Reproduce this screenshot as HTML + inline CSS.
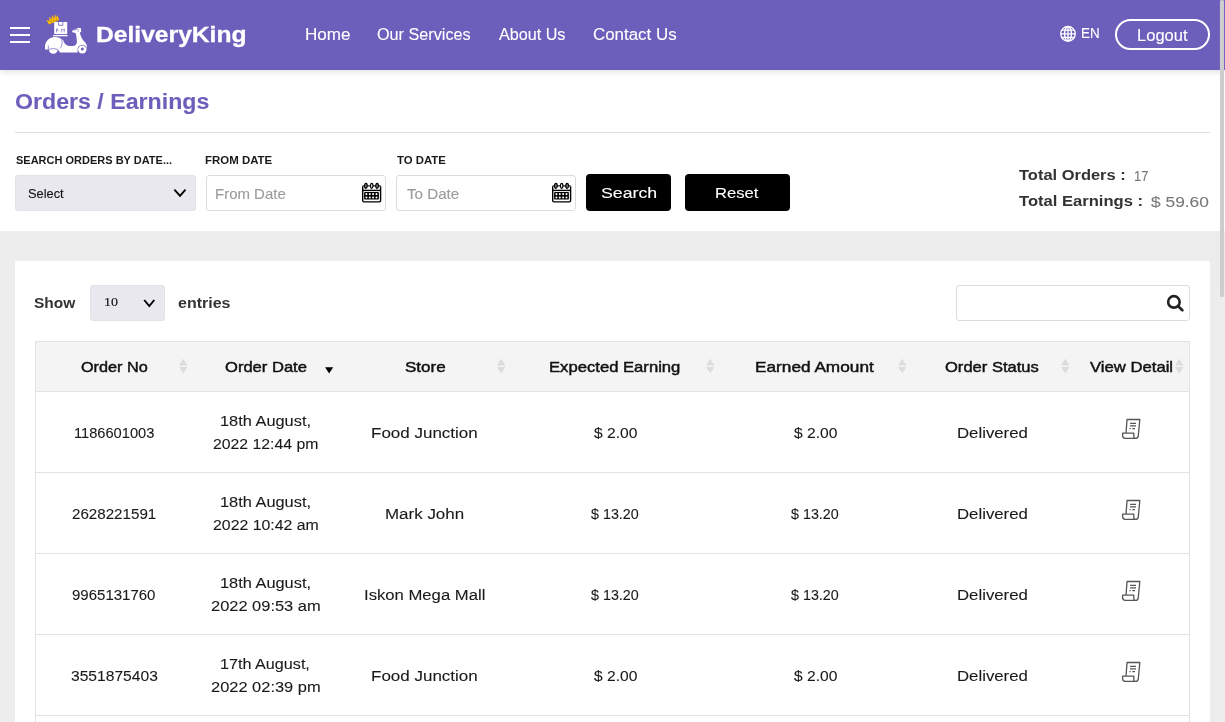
<!DOCTYPE html>
<html>
<head>
<meta charset="utf-8">
<style>
*{box-sizing:border-box;margin:0;padding:0}
html,body{width:1225px;height:722px;overflow:hidden;background:#ededed}
body{font-family:"Liberation Sans",sans-serif;position:relative;color:#222}
.a{position:absolute}
.t{position:absolute;white-space:nowrap;line-height:1.15;transform-origin:0 0}
#hdr{position:absolute;left:0;top:0;width:1225px;height:70px;background:#6c5fbc;box-shadow:0 2px 6px rgba(0,0,0,.12);z-index:1}
#top{position:absolute;left:0;top:70px;width:1225px;height:161px;background:#fff}
.sel{background:#e9e8ee;border:1px solid #e2e1e7;border-radius:3px}
.inp{background:#fff;border:1px solid #dcdcdc;border-radius:3px}
.btn{background:#000;border-radius:4px}
#card{position:absolute;left:15px;top:261px;width:1195px;height:461px;background:#fff}
</style>
</head>
<body>
<svg style="display:none"><defs><g id="receipt" fill="none" stroke="#555" stroke-width="1.3" stroke-linejoin="round">
<path d="M10,18.2 L11.05,4.5 H23.8 L22.3,20.8 Q22,23.3 19.6,23.3 Q17.8,23.3 17.8,21.4 V18.2 H6.6 V20.6 Q6.6,23.3 9.2,23.3 H19.6"/>
<path d="M14.1,8.3 H20 M14,10.9 H20 M13.4,13.6 H14.6 M16.3,13.6 H19"/>
</g></defs></svg>
<div id="top"></div>
<div id="hdr"></div>
<div class="a" style="left:10px;top:27px;width:20px;height:2px;background:#fff;z-index:2"></div>
<div class="a" style="left:10px;top:34px;width:20px;height:2px;background:#fff;z-index:2"></div>
<div class="a" style="left:10px;top:41px;width:20px;height:2px;background:#fff;z-index:2"></div>
<div style="position:absolute;left:0;top:0;z-index:2">
<svg class="a" style="left:42px;top:12px" width="50" height="45" viewBox="0 0 50 45">
<g transform="translate(10.7 7.3) rotate(-24)"><path d="M-5.6,3.2 L-6,-2.2 L-3.6,0.2 L-2.4,-3.8 L-0.8,-0.2 L0.8,-4.4 L2.2,-0.2 L3.8,-3.8 L4.6,0.2 L6.2,-2.4 L5.6,3.2 Z" fill="#f5b800"/>
<circle cx="-2.4" cy="1.6" r="0.7" fill="#c98a00"/><circle cx="0.6" cy="1.6" r="0.7" fill="#c98a00"/><circle cx="3.4" cy="1.6" r="0.7" fill="#c98a00"/></g>
<rect x="12.2" y="10" width="13" height="12.1" fill="#fff"/>
<path d="M16.6,10 V13.3 H20.8 V10" fill="none" stroke="#6c5fbc" stroke-width="0.8"/>
<path d="M14.5,20.4 V16.8 h1.3 v1.7 h-1.3 M19.8,20.4 V17 L19.1,18 M19.8,17 L20.5,18 M22.2,20.4 V17 L21.5,18 M22.2,17 L22.9,18" fill="none" stroke="#6c5fbc" stroke-width="0.6"/>
<rect x="11.2" y="23" width="14.4" height="1.3" fill="#fff"/>
<circle cx="11.3" cy="37.4" r="4.4" fill="#fff"/>
<circle cx="40.3" cy="37.1" r="4.3" fill="#fff"/>
<path d="M3,37.4 L3,33.6 C3.6,28.6 8,24.9 12.6,24.9 C16.6,24.9 19.6,26.4 21.2,28.2 C22.6,32.4 25,34 28.2,34 L30.4,34 C33.4,34 35,32.2 34.9,29.8 C34.8,26.8 34.4,23.6 33.6,21.1 L30.4,20.2 L30.2,18.6 L36.6,15.8 L39,16.2 L39.1,19.7 L37.9,20.4 C38.3,23.6 40,27.4 43.2,30.6 C44.6,32.2 45,34 45,36.2 L45,37.4 C45,35 43,33 40.3,33 C37.6,33 35.6,35 35.6,37.4 L35.6,40.6 L18,40.6 L16,37.4 L3,37.4 Z" fill="#fff"/>
<path d="M19,26 C20.6,28.6 20.6,33.6 18.2,36.4 M6.6,37.6 C8.5,36.4 14,36.4 15.9,37.6" fill="none" stroke="#6c5fbc" stroke-width="0.7"/>
<path d="M6.3,33.6 V37.4" stroke="#6c5fbc" stroke-width="0.7"/>
<path d="M36.2,36.4 C36.6,34.6 38.2,33.2 40.3,33.2 C42.4,33.2 44,34.6 44.4,36.4" fill="none" stroke="#6c5fbc" stroke-width="0.7"/>
<circle cx="40.3" cy="37.1" r="1.5" fill="#6c5fbc"/>
<path d="M31.4,18.6 C32.6,18 33.8,17.5 35,17.3 M35.6,17 C36.4,17.8 36.6,19 36,19.8" stroke="#6c5fbc" stroke-width="0.6" fill="none"/>
</svg>
<svg class="a" style="left:1059px;top:25px" width="18" height="18" viewBox="0 0 18 18">
<g fill="none" stroke="#fff" stroke-width="1.3">
<circle cx="9" cy="8.8" r="7.3"/>
<ellipse cx="9" cy="8.8" rx="3.4" ry="7.3"/>
<path d="M9,1.5 V16.1 M1.7,8.8 H16.3 M2.6,5.1 H15.4 M2.6,12.5 H15.4"/>
</g></svg>
<div class="a" style="left:1115px;top:19px;width:95px;height:31px;border:2px solid #fff;border-radius:16px"></div>
</div>
<div class="a" style="left:1220px;top:0;width:3.5px;height:297px;background:#cdcdcd;border-radius:2px;box-shadow:0 0 0.8px #d8d8d8;z-index:5"></div>

<div class="a" style="left:15px;top:132px;width:1195px;height:1px;background:#dedede"></div>
<div class="a sel" style="left:15px;top:175px;width:181px;height:36px"></div>
<svg class="a" style="left:172px;top:187px" width="16" height="12" viewBox="0 0 16 12"><path d="M2.4,2.6 L8,8.8 L13.5,2.6" fill="none" stroke="#000" stroke-width="1.9"/></svg>
<div class="a inp" style="left:206px;top:175px;width:180px;height:36px"></div>
<svg class="a" style="left:361px;top:181px" width="22" height="23" viewBox="0 0 22 23">
<g fill="none" stroke="#000" stroke-width="1.4">
<path d="M1.7,5.2 V19.6 Q1.7,20.9 3,20.9 H18.3 Q19.6,20.9 19.6,19.6 V5.2"/>
<path d="M1.7,9.4 H19.6"/>
<path d="M1.7,4.9 H19.6" stroke-width="1.1"/>
</g>
<g fill="#888" stroke="#000" stroke-width="1.2">
<ellipse cx="4.9" cy="4.8" rx="1.35" ry="2.5"/><ellipse cx="10.7" cy="4.8" rx="1.2" ry="2.5" fill="#fff"/><ellipse cx="16.1" cy="4.8" rx="1.35" ry="2.5"/>
</g>
<rect x="3.1" y="11.1" width="14.8" height="7.4" rx="0.8" fill="#000"/>
<g fill="#fff"><circle cx="5.4" cy="13.1" r="1.05"/><circle cx="8.8" cy="13.1" r="1.05"/><circle cx="12.1" cy="13.1" r="1.05"/><circle cx="15.5" cy="13.1" r="1.05"/>
<circle cx="5.4" cy="16.5" r="1.05"/><circle cx="8.8" cy="16.5" r="1.05"/><circle cx="12.1" cy="16.5" r="1.05"/><circle cx="15.5" cy="16.5" r="1.05"/></g>
</svg>
<div class="a inp" style="left:396px;top:175px;width:180px;height:36px"></div>
<svg class="a" style="left:551px;top:181px" width="22" height="23" viewBox="0 0 22 23">
<g fill="none" stroke="#000" stroke-width="1.4">
<path d="M1.7,5.2 V19.6 Q1.7,20.9 3,20.9 H18.3 Q19.6,20.9 19.6,19.6 V5.2"/>
<path d="M1.7,9.4 H19.6"/>
<path d="M1.7,4.9 H19.6" stroke-width="1.1"/>
</g>
<g fill="#888" stroke="#000" stroke-width="1.2">
<ellipse cx="4.9" cy="4.8" rx="1.35" ry="2.5"/><ellipse cx="10.7" cy="4.8" rx="1.2" ry="2.5" fill="#fff"/><ellipse cx="16.1" cy="4.8" rx="1.35" ry="2.5"/>
</g>
<rect x="3.1" y="11.1" width="14.8" height="7.4" rx="0.8" fill="#000"/>
<g fill="#fff"><circle cx="5.4" cy="13.1" r="1.05"/><circle cx="8.8" cy="13.1" r="1.05"/><circle cx="12.1" cy="13.1" r="1.05"/><circle cx="15.5" cy="13.1" r="1.05"/>
<circle cx="5.4" cy="16.5" r="1.05"/><circle cx="8.8" cy="16.5" r="1.05"/><circle cx="12.1" cy="16.5" r="1.05"/><circle cx="15.5" cy="16.5" r="1.05"/></g>
</svg>
<div class="a btn" style="left:586px;top:174px;width:85px;height:37px"></div>
<div class="a btn" style="left:685px;top:174px;width:105px;height:37px"></div>

<div id="card"></div>
<div class="a sel" style="left:90px;top:285px;width:75px;height:36px"></div>
<svg class="a" style="left:141px;top:297px" width="16" height="12" viewBox="0 0 16 12"><path d="M3.2,3 L8.3,9 L13.3,3" fill="none" stroke="#000" stroke-width="1.9"/></svg>
<div class="a inp" style="left:956px;top:285px;width:234px;height:36px"></div>
<svg class="a" style="left:1162px;top:290px" width="26" height="26" viewBox="0 0 26 26"><circle cx="11.9" cy="11.9" r="5.75" fill="none" stroke="#222" stroke-width="2.6"/><path d="M16.2,16.2 L20.4,20.3" stroke="#222" stroke-width="2.6" stroke-linecap="round"/></svg>

<div class="a" style="left:35px;top:341px;width:1155px;height:381px;border:1px solid #e2e2e2;border-bottom:none"></div>
<div class="a" style="left:36px;top:342px;width:1153px;height:50px;background:#f4f4f4;border-bottom:1px solid #e2e2e2"></div>
<svg class="a" style="left:179.1px;top:354px" width="10" height="22" viewBox="0 0 10 22"><path d="M0,11.6 H8.5 L4.2,4.7 Z M0,13.1 H8.5 L4.2,19.6 Z" fill="#dcdcdc"/></svg>
<svg class="a" style="left:325.1px;top:354px" width="10" height="22" viewBox="0 0 10 22"><path d="M0.1,13.2 H8.2 L4.15,19.5 Z" fill="#000"/></svg>
<svg class="a" style="left:497.1px;top:354px" width="10" height="22" viewBox="0 0 10 22"><path d="M0,11.6 H8.5 L4.2,4.7 Z M0,13.1 H8.5 L4.2,19.6 Z" fill="#dcdcdc"/></svg>
<svg class="a" style="left:706.1px;top:354px" width="10" height="22" viewBox="0 0 10 22"><path d="M0,11.6 H8.5 L4.2,4.7 Z M0,13.1 H8.5 L4.2,19.6 Z" fill="#dcdcdc"/></svg>
<svg class="a" style="left:898.1px;top:354px" width="10" height="22" viewBox="0 0 10 22"><path d="M0,11.6 H8.5 L4.2,4.7 Z M0,13.1 H8.5 L4.2,19.6 Z" fill="#dcdcdc"/></svg>
<svg class="a" style="left:1061.1px;top:354px" width="10" height="22" viewBox="0 0 10 22"><path d="M0,11.6 H8.5 L4.2,4.7 Z M0,13.1 H8.5 L4.2,19.6 Z" fill="#dcdcdc"/></svg>
<svg class="a" style="left:1175.1px;top:354px" width="10" height="22" viewBox="0 0 10 22"><path d="M0,11.6 H8.5 L4.2,4.7 Z M0,13.1 H8.5 L4.2,19.6 Z" fill="#dcdcdc"/></svg>
<div class="a" style="left:35px;top:472px;width:1155px;height:1px;background:#e2e2e2"></div>
<svg class="a" style="left:1116px;top:415px" width="30" height="28" viewBox="0 0 30 28"><use href="#receipt"/></svg>
<div class="a" style="left:35px;top:553px;width:1155px;height:1px;background:#e2e2e2"></div>
<svg class="a" style="left:1116px;top:496px" width="30" height="28" viewBox="0 0 30 28"><use href="#receipt"/></svg>
<div class="a" style="left:35px;top:634px;width:1155px;height:1px;background:#e2e2e2"></div>
<svg class="a" style="left:1116px;top:577px" width="30" height="28" viewBox="0 0 30 28"><use href="#receipt"/></svg>
<div class="a" style="left:35px;top:715px;width:1155px;height:1px;background:#e2e2e2"></div>
<svg class="a" style="left:1116px;top:658px" width="30" height="28" viewBox="0 0 30 28"><use href="#receipt"/></svg>
<div style="position:absolute;left:0;top:0;z-index:3;will-change:transform">
<div class="t" id="t0" style="left:96px;top:22px;font-size:22px;font-weight:700;color:#fff;letter-spacing:0.00px;transform:scaleX(1.1192);-webkit-text-stroke:0.3px #fff;">DeliveryKing</div>
<div class="t" id="t1" style="left:305px;top:26px;font-size:16px;font-weight:400;color:#fff;letter-spacing:0.00px;transform:scaleX(1.0664);-webkit-text-stroke:0.1px #fff;">Home</div>
<div class="t" id="t2" style="left:377px;top:26px;font-size:16px;font-weight:400;color:#fff;letter-spacing:0.00px;transform:scaleX(1.0127);-webkit-text-stroke:0.1px #fff;">Our Services</div>
<div class="t" id="t3" style="left:499px;top:26px;font-size:16px;font-weight:400;color:#fff;letter-spacing:0.00px;transform:scaleX(1.0088);-webkit-text-stroke:0.1px #fff;">About Us</div>
<div class="t" id="t4" style="left:593px;top:26px;font-size:16px;font-weight:400;color:#fff;letter-spacing:0.00px;transform:scaleX(1.0566);-webkit-text-stroke:0.1px #fff;">Contact Us</div>
<div class="t" id="t5" style="left:1081px;top:24px;font-size:15px;font-weight:400;color:#fff;letter-spacing:0.00px;transform:scaleX(0.8955);-webkit-text-stroke:0.1px #fff;">EN</div>
<div class="t" id="t6" style="left:1137px;top:27px;font-size:16px;font-weight:400;color:#fff;letter-spacing:0.00px;transform:scaleX(1.0325);-webkit-text-stroke:0.1px #fff;">Logout</div>
<div class="t" id="t7" style="left:15px;top:89px;font-size:22px;font-weight:700;color:#6c5fbc;letter-spacing:0.00px;transform:scaleX(1.0526);-webkit-text-stroke:0.1px #6c5fbc;">Orders / Earnings</div>
<div class="t" id="t8" style="left:16px;top:154px;font-size:10.8px;font-weight:700;color:#1a1a1a;letter-spacing:0.00px;transform:scaleX(1.0190);-webkit-text-stroke:0.0px #1a1a1a;">SEARCH ORDERS BY DATE...</div>
<div class="t" id="t9" style="left:205px;top:154px;font-size:10.8px;font-weight:700;color:#1a1a1a;letter-spacing:0.00px;transform:scaleX(1.0603);-webkit-text-stroke:0.0px #1a1a1a;">FROM DATE</div>
<div class="t" id="t10" style="left:397px;top:154px;font-size:10.8px;font-weight:700;color:#1a1a1a;letter-spacing:0.00px;transform:scaleX(1.0525);-webkit-text-stroke:0.0px #1a1a1a;">TO DATE</div>
<div class="t" id="t11" style="left:28px;top:187px;font-size:13px;font-weight:400;color:#111;letter-spacing:0.00px;transform:scaleX(0.9869);-webkit-text-stroke:0.1px #111;">Select</div>
<div class="t" id="t12" style="left:215px;top:186px;font-size:14.4px;font-weight:400;color:#9a9a9a;letter-spacing:0.00px;transform:scaleX(1.0409);-webkit-text-stroke:0.1px #9a9a9a;">From Date</div>
<div class="t" id="t13" style="left:407px;top:186px;font-size:14.4px;font-weight:400;color:#9a9a9a;letter-spacing:0.00px;transform:scaleX(1.0530);-webkit-text-stroke:0.1px #9a9a9a;">To Date</div>
<div class="t" id="t14" style="left:601px;top:184px;font-size:15.5px;font-weight:400;color:#fff;letter-spacing:0.00px;transform:scaleX(1.1453);-webkit-text-stroke:0.1px #fff;">Search</div>
<div class="t" id="t15" style="left:715px;top:184px;font-size:15.5px;font-weight:400;color:#fff;letter-spacing:0.00px;transform:scaleX(1.0705);-webkit-text-stroke:0.1px #fff;">Reset</div>
<div class="t" id="t16" style="left:1019px;top:167px;font-size:14.5px;font-weight:700;color:#333;letter-spacing:0.00px;transform:scaleX(1.1355);-webkit-text-stroke:0.0px #333;">Total Orders :</div>
<div class="t" id="t17" style="left:1134px;top:167px;font-size:15px;font-weight:400;color:#777;letter-spacing:0.00px;transform:scaleX(0.8652);-webkit-text-stroke:0.1px #777;">17</div>
<div class="t" id="t18" style="left:1019px;top:193px;font-size:14.5px;font-weight:700;color:#333;letter-spacing:0.00px;transform:scaleX(1.1431);-webkit-text-stroke:0.0px #333;">Total Earnings :</div>
<div class="t" id="t19" style="left:1151px;top:193px;font-size:15px;font-weight:400;color:#777;letter-spacing:0.00px;transform:scaleX(1.1570);-webkit-text-stroke:0.1px #777;">$ 59.60</div>
<div class="t" id="t20" style="left:34px;top:295px;font-size:14.5px;font-weight:700;color:#333;letter-spacing:0.00px;transform:scaleX(1.0685);-webkit-text-stroke:0.0px #333;">Show</div>
<div class="t" id="t21" style="left:104px;top:294px;font-size:13.5px;font-weight:400;color:#111;letter-spacing:0.00px;transform:scaleX(1.0370);-webkit-text-stroke:0.15px #111;font-family:'Liberation Serif',serif;">10</div>
<div class="t" id="t22" style="left:178px;top:295px;font-size:14.5px;font-weight:700;color:#333;letter-spacing:0.00px;transform:scaleX(1.1021);-webkit-text-stroke:0.0px #333;">entries</div>
<div class="t" id="t23" style="left:81px;top:359px;font-size:14.8px;font-weight:400;color:#111;letter-spacing:0.00px;transform:scaleX(1.0960);-webkit-text-stroke:0.45px #111;">Order No</div>
<div class="t" id="t24" style="left:225px;top:359px;font-size:14.8px;font-weight:400;color:#111;letter-spacing:0.00px;transform:scaleX(1.1191);-webkit-text-stroke:0.45px #111;">Order Date</div>
<div class="t" id="t25" style="left:405px;top:359px;font-size:14.8px;font-weight:400;color:#111;letter-spacing:0.00px;transform:scaleX(1.1484);-webkit-text-stroke:0.45px #111;">Store</div>
<div class="t" id="t26" style="left:549px;top:359px;font-size:14.8px;font-weight:400;color:#111;letter-spacing:0.00px;transform:scaleX(1.1247);-webkit-text-stroke:0.45px #111;">Expected Earning</div>
<div class="t" id="t27" style="left:755px;top:359px;font-size:14.8px;font-weight:400;color:#111;letter-spacing:0.00px;transform:scaleX(1.1642);-webkit-text-stroke:0.45px #111;">Earned Amount</div>
<div class="t" id="t28" style="left:945px;top:359px;font-size:14.8px;font-weight:400;color:#111;letter-spacing:0.00px;transform:scaleX(1.1186);-webkit-text-stroke:0.45px #111;">Order Status</div>
<div class="t" id="t29" style="left:1090px;top:359px;font-size:14.8px;font-weight:400;color:#111;letter-spacing:0.00px;transform:scaleX(1.1265);-webkit-text-stroke:0.45px #111;">View Detail</div>
<div class="t" id="t30" style="left:74px;top:424px;font-size:15.2px;font-weight:400;color:#1a1a1a;letter-spacing:0.00px;transform:scaleX(0.9634);-webkit-text-stroke:0.1px #1a1a1a;">1186601003</div>
<div class="t" id="t31" style="left:220px;top:412px;font-size:15.2px;font-weight:400;color:#1a1a1a;letter-spacing:0.00px;transform:scaleX(1.0777);-webkit-text-stroke:0.1px #1a1a1a;">18th August,</div>
<div class="t" id="t32" style="left:213px;top:435px;font-size:15.2px;font-weight:400;color:#1a1a1a;letter-spacing:0.00px;transform:scaleX(1.0402);-webkit-text-stroke:0.1px #1a1a1a;">2022 12:44 pm</div>
<div class="t" id="t33" style="left:371px;top:424px;font-size:15.2px;font-weight:400;color:#1a1a1a;letter-spacing:0.00px;transform:scaleX(1.1187);-webkit-text-stroke:0.1px #1a1a1a;">Food Junction</div>
<div class="t" id="t34" style="left:594px;top:424px;font-size:15.2px;font-weight:400;color:#1a1a1a;letter-spacing:0.00px;transform:scaleX(1.0269);-webkit-text-stroke:0.1px #1a1a1a;">$ 2.00</div>
<div class="t" id="t35" style="left:794px;top:424px;font-size:15.2px;font-weight:400;color:#1a1a1a;letter-spacing:0.00px;transform:scaleX(1.0269);-webkit-text-stroke:0.1px #1a1a1a;">$ 2.00</div>
<div class="t" id="t36" style="left:957px;top:424px;font-size:15.2px;font-weight:400;color:#1a1a1a;letter-spacing:0.00px;transform:scaleX(1.1046);-webkit-text-stroke:0.1px #1a1a1a;">Delivered</div>
<div class="t" id="t37" style="left:72px;top:505px;font-size:15.2px;font-weight:400;color:#1a1a1a;letter-spacing:0.00px;transform:scaleX(0.9973);-webkit-text-stroke:0.1px #1a1a1a;">2628221591</div>
<div class="t" id="t38" style="left:220px;top:493px;font-size:15.2px;font-weight:400;color:#1a1a1a;letter-spacing:0.00px;transform:scaleX(1.0777);-webkit-text-stroke:0.1px #1a1a1a;">18th August,</div>
<div class="t" id="t39" style="left:213px;top:516px;font-size:15.2px;font-weight:400;color:#1a1a1a;letter-spacing:0.00px;transform:scaleX(1.0440);-webkit-text-stroke:0.1px #1a1a1a;">2022 10:42 am</div>
<div class="t" id="t40" style="left:385px;top:505px;font-size:15.2px;font-weight:400;color:#1a1a1a;letter-spacing:0.00px;transform:scaleX(1.1163);-webkit-text-stroke:0.1px #1a1a1a;">Mark John</div>
<div class="t" id="t41" style="left:591px;top:505px;font-size:15.2px;font-weight:400;color:#1a1a1a;letter-spacing:0.00px;transform:scaleX(0.9416);-webkit-text-stroke:0.1px #1a1a1a;">$ 13.20</div>
<div class="t" id="t42" style="left:791px;top:505px;font-size:15.2px;font-weight:400;color:#1a1a1a;letter-spacing:0.00px;transform:scaleX(0.9416);-webkit-text-stroke:0.1px #1a1a1a;">$ 13.20</div>
<div class="t" id="t43" style="left:957px;top:505px;font-size:15.2px;font-weight:400;color:#1a1a1a;letter-spacing:0.00px;transform:scaleX(1.1046);-webkit-text-stroke:0.1px #1a1a1a;">Delivered</div>
<div class="t" id="t44" style="left:72px;top:586px;font-size:15.2px;font-weight:400;color:#1a1a1a;letter-spacing:0.00px;transform:scaleX(0.9882);-webkit-text-stroke:0.1px #1a1a1a;">9965131760</div>
<div class="t" id="t45" style="left:220px;top:574px;font-size:15.2px;font-weight:400;color:#1a1a1a;letter-spacing:0.00px;transform:scaleX(1.0777);-webkit-text-stroke:0.1px #1a1a1a;">18th August,</div>
<div class="t" id="t46" style="left:211px;top:597px;font-size:15.2px;font-weight:400;color:#1a1a1a;letter-spacing:0.00px;transform:scaleX(1.0820);-webkit-text-stroke:0.1px #1a1a1a;">2022 09:53 am</div>
<div class="t" id="t47" style="left:364px;top:586px;font-size:15.2px;font-weight:400;color:#1a1a1a;letter-spacing:0.00px;transform:scaleX(1.0973);-webkit-text-stroke:0.1px #1a1a1a;">Iskon Mega Mall</div>
<div class="t" id="t48" style="left:591px;top:586px;font-size:15.2px;font-weight:400;color:#1a1a1a;letter-spacing:0.00px;transform:scaleX(0.9416);-webkit-text-stroke:0.1px #1a1a1a;">$ 13.20</div>
<div class="t" id="t49" style="left:791px;top:586px;font-size:15.2px;font-weight:400;color:#1a1a1a;letter-spacing:0.00px;transform:scaleX(0.9416);-webkit-text-stroke:0.1px #1a1a1a;">$ 13.20</div>
<div class="t" id="t50" style="left:957px;top:586px;font-size:15.2px;font-weight:400;color:#1a1a1a;letter-spacing:0.00px;transform:scaleX(1.1046);-webkit-text-stroke:0.1px #1a1a1a;">Delivered</div>
<div class="t" id="t51" style="left:71px;top:667px;font-size:15.2px;font-weight:400;color:#1a1a1a;letter-spacing:0.00px;transform:scaleX(1.0279);-webkit-text-stroke:0.1px #1a1a1a;">3551875403</div>
<div class="t" id="t52" style="left:220px;top:655px;font-size:15.2px;font-weight:400;color:#1a1a1a;letter-spacing:0.00px;transform:scaleX(1.0641);-webkit-text-stroke:0.1px #1a1a1a;">17th August,</div>
<div class="t" id="t53" style="left:211px;top:678px;font-size:15.2px;font-weight:400;color:#1a1a1a;letter-spacing:0.00px;transform:scaleX(1.0820);-webkit-text-stroke:0.1px #1a1a1a;">2022 02:39 pm</div>
<div class="t" id="t54" style="left:371px;top:667px;font-size:15.2px;font-weight:400;color:#1a1a1a;letter-spacing:0.00px;transform:scaleX(1.1187);-webkit-text-stroke:0.1px #1a1a1a;">Food Junction</div>
<div class="t" id="t55" style="left:594px;top:667px;font-size:15.2px;font-weight:400;color:#1a1a1a;letter-spacing:0.00px;transform:scaleX(1.0269);-webkit-text-stroke:0.1px #1a1a1a;">$ 2.00</div>
<div class="t" id="t56" style="left:794px;top:667px;font-size:15.2px;font-weight:400;color:#1a1a1a;letter-spacing:0.00px;transform:scaleX(1.0269);-webkit-text-stroke:0.1px #1a1a1a;">$ 2.00</div>
<div class="t" id="t57" style="left:957px;top:667px;font-size:15.2px;font-weight:400;color:#1a1a1a;letter-spacing:0.00px;transform:scaleX(1.1046);-webkit-text-stroke:0.1px #1a1a1a;">Delivered</div>
</div>
</body>
</html>
